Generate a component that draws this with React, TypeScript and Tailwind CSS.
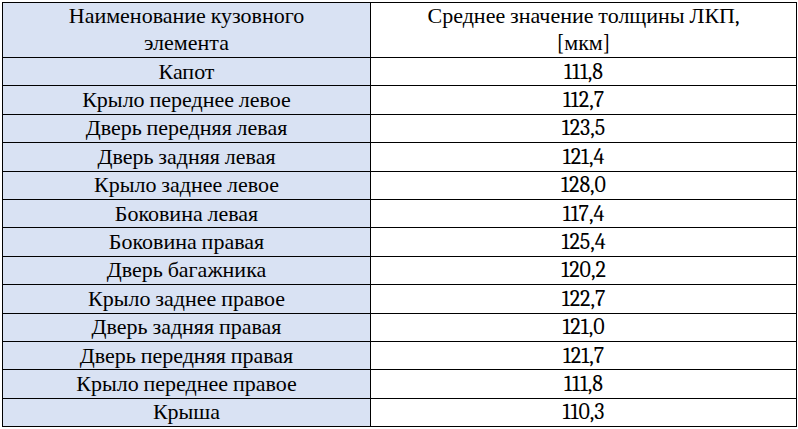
import React from 'react';

const rows: [string, string][] = [
  ['Капот', '111,8'],
  ['Крыло переднее левое', '112,7'],
  ['Дверь передняя левая', '123,5'],
  ['Дверь задняя левая', '121,4'],
  ['Крыло заднее левое', '128,0'],
  ['Боковина левая', '117,4'],
  ['Боковина правая', '125,4'],
  ['Дверь багажника', '120,2'],
  ['Крыло заднее правое', '122,7'],
  ['Дверь задняя правая', '121,0'],
  ['Дверь передняя правая', '121,7'],
  ['Крыло переднее правое', '111,8'],
  ['Крыша', '110,3'],
];

const App: React.FC = () => {
  return (
    <div className="w-[798px] h-[429px] bg-white pl-[2px] pt-[2px] font-serif [font-family:'Times_New_Roman',Tinos,'Liberation_Serif',serif] text-black text-[22px]">
      <div className="grid w-[795px] grid-cols-[368px_426px] grid-rows-[55px_repeat(13,28.4px)] border-r-[1.5px] border-b-[1.5px] border-black">
        {/* Header */}
        <div className="flex flex-col items-center justify-center border-l-[1.5px] border-t-[1.5px] border-black bg-[#d9e2f3] leading-[27px]">
          <span>Наименование кузовного</span>
          <span>элемента</span>
        </div>
        <div className="flex flex-col items-center justify-center border-l-[1.5px] border-t-[1.5px] border-black bg-white leading-[27px]">
          <span>Среднее значение толщины ЛКП,</span>
          <span>[мкм]</span>
        </div>

        {/* Rows */}
        {rows.map(([name, value]) => (
          <React.Fragment key={name}>
            <div className="flex items-center justify-center border-l-[1.5px] border-t-[1.5px] border-black bg-[#d9e2f3] leading-none">
              {name}
            </div>
            <div className="flex items-center justify-center border-l-[1.5px] border-t-[1.5px] border-black bg-white leading-none">
              {value}
            </div>
          </React.Fragment>
        ))}
      </div>
    </div>
  );
};

export default App;
